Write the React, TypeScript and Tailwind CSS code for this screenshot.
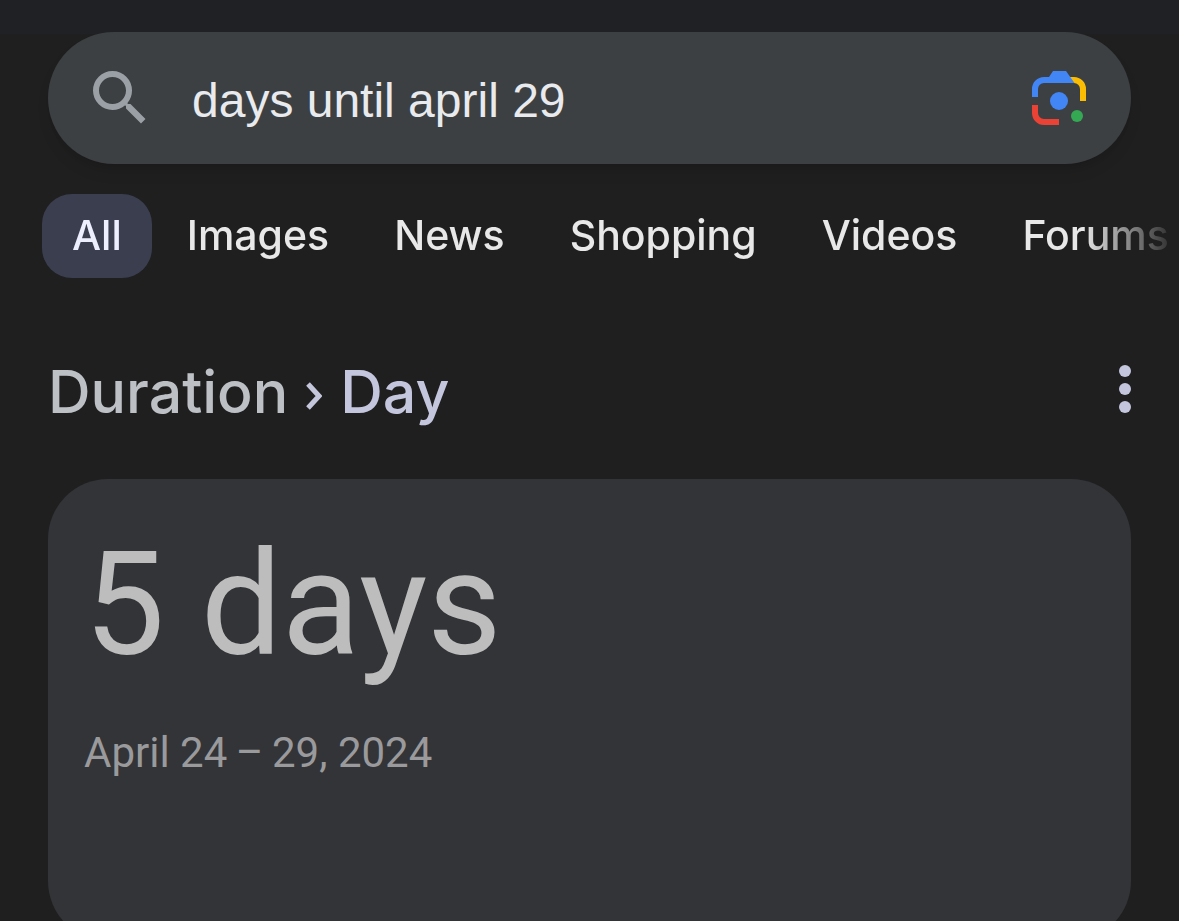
import { useState } from "react";
import { clsx } from "clsx";

const tabs = ["All", "Images", "News", "Shopping", "Videos", "Forums"];

function SearchIcon() {
  return (
    <svg className="size-18 shrink-0 text-[#9aa0a6]" viewBox="0 0 24 24" fill="currentColor" aria-hidden="true">
      <path d="M15.5 14h-.79l-.28-.27A6.471 6.471 0 0 0 16 9.5 6.5 6.5 0 1 0 9.5 16c1.61 0 3.09-.59 4.23-1.57l.27.28v.79l5 4.99L20.49 19l-4.99-5zm-6 0C7.01 14 5 11.99 5 9.5S7.01 5 9.5 5 14 7.01 14 9.5 11.99 14 9.5 14z" />
    </svg>
  );
}

function LensIcon() {
  return (
    <svg className="size-[54px]" viewBox="0 0 54 54" aria-hidden="true">
      <path fill="#fbbc04" d="M36 6h6a12 12 0 0 1 12 12v12h-6V18a6 6 0 0 0-6-6h-4z" />
      <path fill="#4285f4" d="M0 26v-8A12 12 0 0 1 12 6h5l4-6h13l8.5 12H12a6 6 0 0 0-6 6v8z" />
      <path fill="#ea4335" d="M0 34v8a12 12 0 0 0 12 12h15v-6H12a6 6 0 0 1-6-6v-8z" />
      <circle cx="27" cy="30" r="9" fill="#4285f4" />
      <circle cx="45" cy="45" r="6" fill="#34a853" />
    </svg>
  );
}

export default function App() {
  const [query, setQuery] = useState("days until april 29");
  const [active, setActive] = useState("All");

  return (
    <div className="h-screen overflow-hidden bg-[#1f1f1f] font-['Inter',sans-serif]">
      {/* Search bar */}
      <header className="bg-[linear-gradient(#202125_34px,#1f1f1f_34px)] px-12 pt-8">
        <form
          className="flex items-center h-33 rounded-full bg-[#3c4043] pl-9 pr-[45px] shadow-lg"
          onSubmit={(e) => e.preventDefault()}
        >
          <SearchIcon />
          <input
            type="text"
            aria-label="Search"
            value={query}
            onChange={(e) => setQuery(e.target.value)}
            className="flex-1 min-w-0 ml-9 pt-1 bg-transparent text-[#e8eaed] text-5xl font-['Liberation_Sans',sans-serif] outline-none"
          />
          <button type="button" aria-label="Search by image" className="shrink-0">
            <LensIcon />
          </button>
        </form>
      </header>

      {/* Result filters, fading out at the right edge */}
      <nav className="flex gap-[5px] pl-[42px] pt-[30px] overflow-hidden mask-[linear-gradient(to_left,transparent,black_96px)]">
        {tabs.map((tab) => (
          <button
            key={tab}
            type="button"
            onClick={() => setActive(tab)}
            className={clsx(
              "shrink-0 h-21 px-[30px] rounded-[30px] text-[41px] font-medium",
              active === tab ? "bg-[#3a3e4f] text-[#edefff]" : "text-[#e8e8e8]"
            )}
          >
            {tab}
          </button>
        ))}
      </nav>

      <main className="px-12 pt-18">
        <div className="flex items-start justify-between">
          <h1 className="flex items-center text-[59px] leading-[84px] font-medium text-[#bdc1c6]">
            Duration
            <svg className="w-4 h-7 mt-2 mx-[18px]" viewBox="0 0 16 28" fill="none" stroke="#c4c7dc" strokeWidth="5" aria-hidden="true">
              <path d="M2 2l11 12L2 26" />
            </svg>
            <span className="text-[#c3c6dd]">Day</span>
          </h1>
          <button type="button" aria-label="More options" className="mt-[15px]">
            <svg className="w-3 h-12" viewBox="0 0 12 48" fill="#c3c6dd" aria-hidden="true">
              <circle cx="6" cy="6" r="6" />
              <circle cx="6" cy="24" r="6" />
              <circle cx="6" cy="42" r="6" />
            </svg>
          </button>
        </div>

        {/* Answer card */}
        <section className="mt-[45px] h-[462px] rounded-[60px] bg-[#333438] px-9 pt-10 font-['Roboto',sans-serif]">
          <p className="text-[144px] leading-[172px] text-[#bdbdbd]">5 days</p>
          <p className="mt-8 text-[42px] leading-[60px] text-[#9a9a9c]">April 24{"\u2009"}–{"\u2009"}29, 2024</p>
        </section>
      </main>
    </div>
  );
}
